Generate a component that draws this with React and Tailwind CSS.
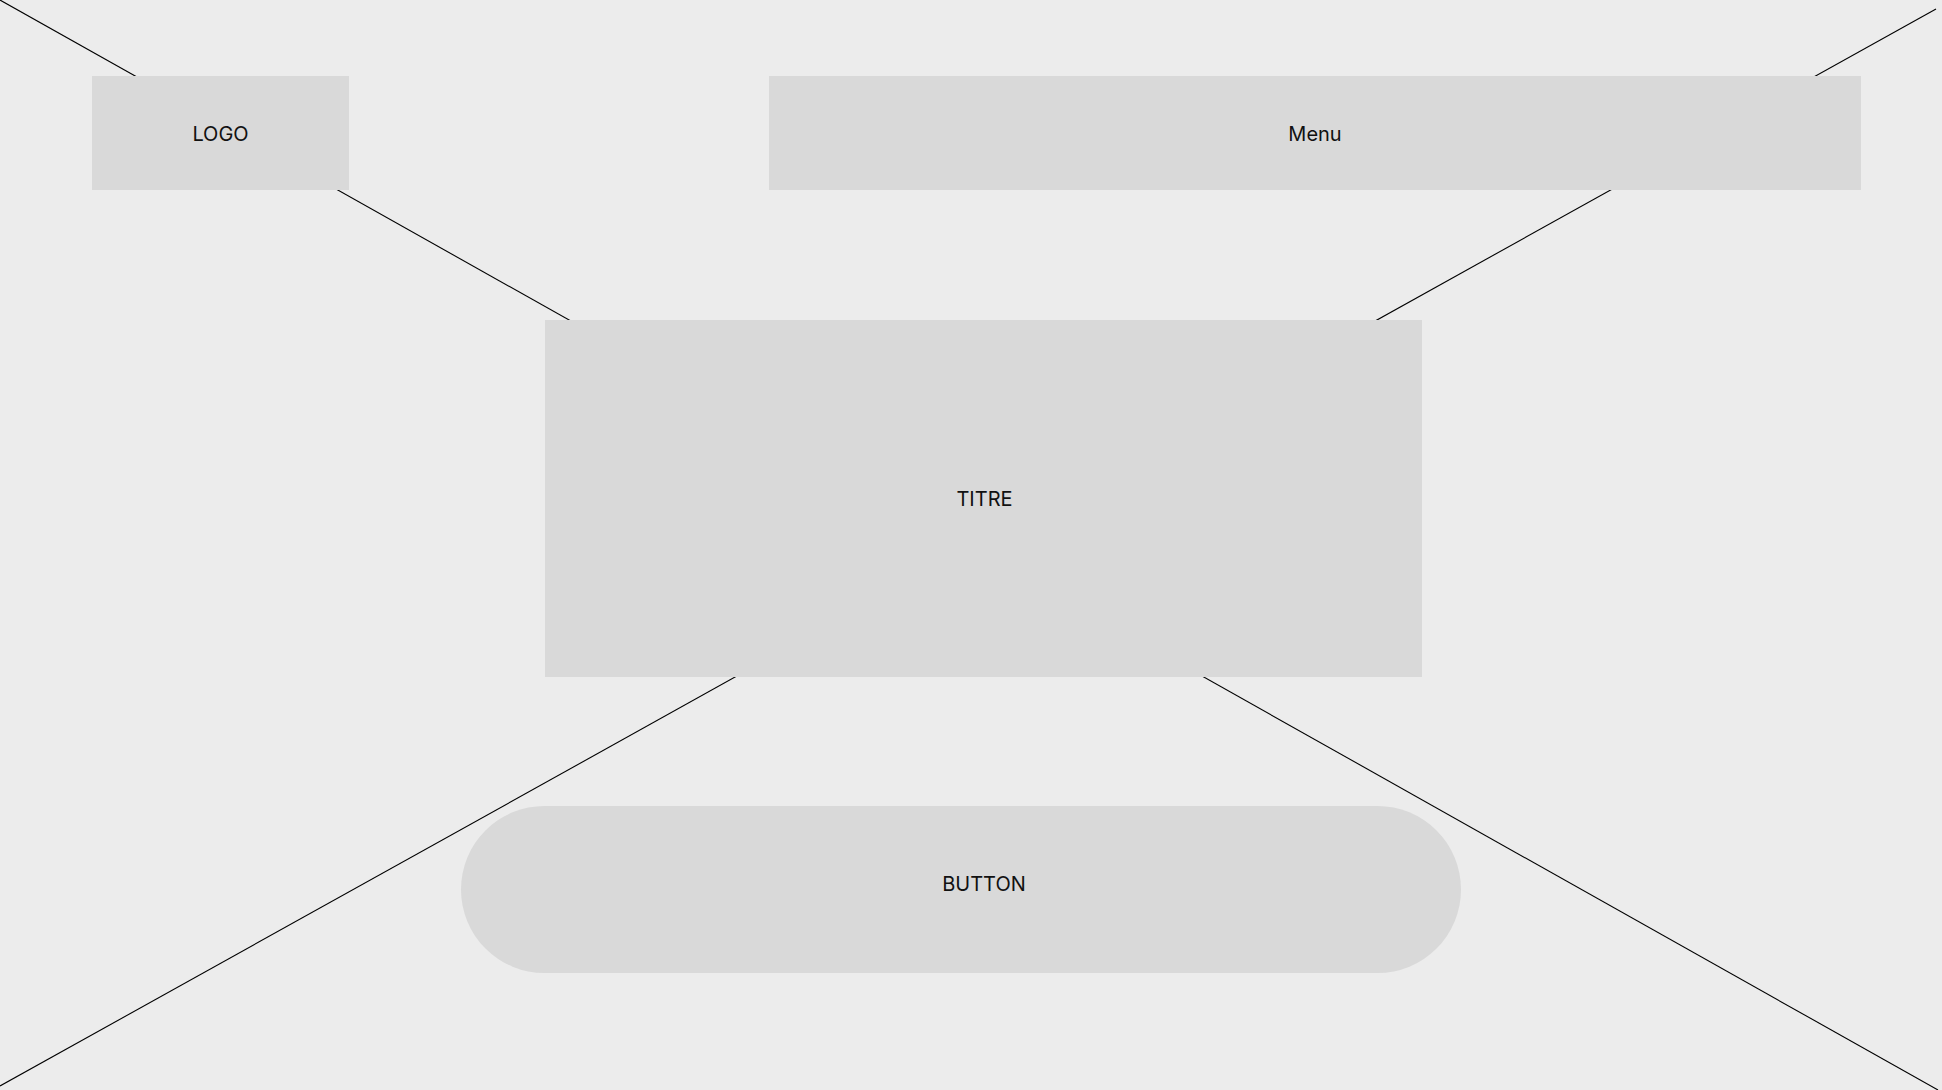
import React from 'react';

const font = { fontFamily: 'Inter, "Noto Sans", sans-serif' };

const Lines = () => (
  <svg
    className="absolute inset-0 pointer-events-none"
    width="1942"
    height="1090"
    viewBox="0 0 1942 1090"
  >
    <line x1="0" y1="0" x2="1938" y2="1090" stroke="#000" strokeWidth="1.1" />
    <line x1="0" y1="1086" x2="1936" y2="9" stroke="#000" strokeWidth="1.1" />
  </svg>
);

const App = () => {
  return (
    <div
      className="relative w-[1942px] h-[1090px] overflow-hidden bg-[#ececec] text-[#111] text-[20px]"
      style={font}
    >
      <Lines />

      <div className="relative flex flex-col">
        {/* header */}
        <div className="flex pt-[76px] pl-[92px]">
          <div className="w-[257px] h-[114px] bg-[#d9d9d9] flex items-center justify-center pt-[2px]">
            LOGO
          </div>
          <div className="ml-[420px] w-[1092px] h-[114px] bg-[#d9d9d9] flex items-center justify-center pt-[2px]">
            Menu
          </div>
        </div>

        {/* titre */}
        <div className="mt-[130px] ml-[545px] w-[877px] h-[357px] bg-[#d9d9d9] flex items-center justify-center pl-[2px]">
          TITRE
        </div>

        {/* bouton */}
        <div className="mt-[129px] ml-[461px] w-[1000px] h-[167px] rounded-full bg-[#d9d9d9] flex items-center justify-center pl-[46px] pb-[12px]">
          BUTTON
        </div>
      </div>
    </div>
  );
};

export default App;
